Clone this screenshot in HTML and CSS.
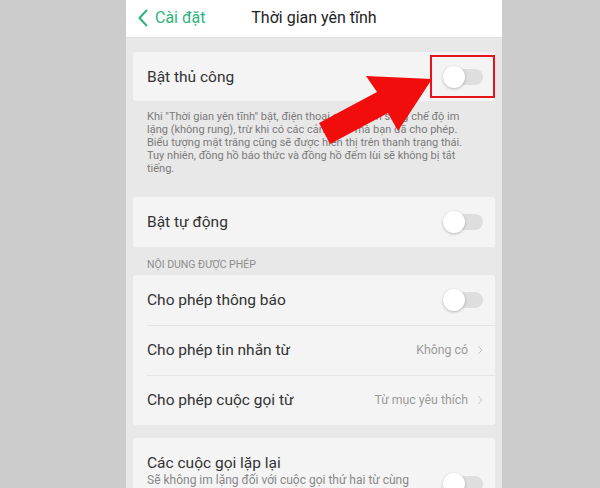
FILE: index.html
```html
<!DOCTYPE html>
<html lang="vi">
<head>
<meta charset="utf-8">
<link rel="stylesheet" href="styles.css">
</head>
<body>
<div class="phone">
  <header class="topbar">
    <div class="back">
      <svg class="back-icon" width="12" height="18" viewBox="0 0 12 18"><path d="M9.5 1.5 L2.5 9 L9.5 16.5" fill="none" stroke="#2db37c" stroke-width="2" stroke-linecap="round" stroke-linejoin="round"/></svg>
      <span>Cài đặt</span>
    </div>
    <div class="title">Thời gian yên tĩnh</div>
    <div></div>
  </header>
  <main class="content">
    <section class="card first">
      <div class="row"><span class="label">Bật thủ công</span><span class="toggle"><span class="knob"></span></span></div>
    </section>
    <p class="desc">Khi "Thời gian yên tĩnh" bật, điện thoại sẽ chuyển sang chế độ im<br>lặng (không rung), trừ khi có các cảnh báo mà bạn đã cho phép.<br>Biểu tượng mặt trăng cũng sẽ được hiển thị trên thanh trạng thái.<br>Tuy nhiên, đồng hồ báo thức và đồng hồ đếm lùi sẽ không bị tắt<br>tiếng.</p>
    <section class="card">
      <div class="row"><span class="label">Bật tự động</span><span class="toggle"><span class="knob"></span></span></div>
    </section>
    <div class="section-title">NỘI DUNG ĐƯỢC PHÉP</div>
    <section class="card">
      <div class="row"><span class="label">Cho phép thông báo</span><span class="toggle"><span class="knob"></span></span></div>
      <div class="row divided"><span class="label">Cho phép tin nhắn từ</span><span class="value">Không có<svg class="chev" width="6" height="10" viewBox="0 0 6 10"><path d="M1 1 L5 5 L1 9" fill="none" stroke="#c4c4c4" stroke-width="1"/></svg></span></div>
      <div class="row divided"><span class="label">Cho phép cuộc gọi từ</span><span class="value">Từ mục yêu thích<svg class="chev" width="6" height="10" viewBox="0 0 6 10"><path d="M1 1 L5 5 L1 9" fill="none" stroke="#c4c4c4" stroke-width="1"/></svg></span></div>
    </section>
    <section class="card card-last">
      <div class="row tall">
        <div class="stack">
          <span class="label">Các cuộc gọi lặp lại</span>
          <span class="sub">Sẽ không im lặng đối với cuộc gọi thứ hai từ cùng</span>
        </div>
        <span class="toggle"><span class="knob"></span></span>
      </div>
    </section>
  </main>
</div>
<div class="highlight"></div>
<svg class="arrow" width="600" height="488" viewBox="0 0 600 488">
  <polygon points="432,79 398,131 388,113 330,144 319,123 377,92 366,76" fill="#f20d0d"/>
</svg>
</body>
</html>
```
FILE: styles.css
```css
* { box-sizing: border-box; }
html, body { margin: 0; padding: 0; }
body {
  width: 600px;
  height: 488px;
  background: #cccccc;
  font-family: Roboto, "Noto Sans", "DejaVu Sans", sans-serif;
  overflow: hidden;
  position: relative;
}
.phone {
  margin-left: 126px;
  width: 376px;
  height: 488px;
  background: #e8e8e8;
  overflow: hidden;
}
.topbar {
  height: 38px;
  background: #ffffff;
  border-bottom: 1px solid #e0e0e0;
  display: grid;
  grid-template-columns: 1fr auto 1fr;
  align-items: center;
  padding-bottom: 2px;
}
.back {
  display: flex;
  align-items: center;
  gap: 6px;
  padding-left: 11px;
  color: #2db37c;
  font-size: 16px;
}
.title {
  font-size: 16px;
  color: #222;
}
.content {
  padding: 14px 7px 0 7px;
}
.card {
  background: #f4f4f4;
  border-radius: 3px;
}
.row {
  height: 50px;
  display: flex;
  align-items: center;
  justify-content: space-between;
  padding: 0 12px 0 14px;
}
.card.first .row { height: 49px; }
.row.divided {
  position: relative;
}
.row.divided::before {
  content: "";
  position: absolute;
  left: 14px;
  right: 0;
  top: 0;
  height: 1px;
  background: #e4e4e4;
}
.label {
  font-size: 15.5px;
  color: #333;
}
.toggle {
  width: 40px;
  height: 16px;
  border-radius: 8px;
  background: #dedede;
  position: relative;
  flex: none;
}
.knob {
  position: absolute;
  left: 0;
  top: -3px;
  width: 22px;
  height: 22px;
  border-radius: 50%;
  background: #ffffff;
  box-shadow: 0 1px 3px rgba(0,0,0,0.25);
}
.value {
  display: flex;
  align-items: center;
  gap: 9px;
  font-size: 12.3px;
  color: #9a9a9a;
}
.desc {
  margin: 0;
  padding: 9px 10px 22px 14px;
  font-size: 11px;
  line-height: 13px;
  color: #7a7a7a;
}
.section-title {
  height: 28px;
  padding: 12px 0 0 14px;
  font-size: 10.5px;
  line-height: 12px;
  color: #8c8c8c;
}
.card-last { margin-top: 13px; }
.row.tall { height: 60px; align-items: flex-start; padding-top: 16px; }
.stack { display: flex; flex-direction: column; }
.stack .sub { font-size: 12px; color: #888; margin-top: 1px; }
.row.tall .toggle { margin-top: 22px; }
.highlight {
  position: absolute;
  left: 430px;
  top: 55px;
  width: 65px;
  height: 43px;
  border: 2px solid #e8141c;
}
.arrow {
  position: absolute;
  left: 0;
  top: 0;
  pointer-events: none;
}
```
